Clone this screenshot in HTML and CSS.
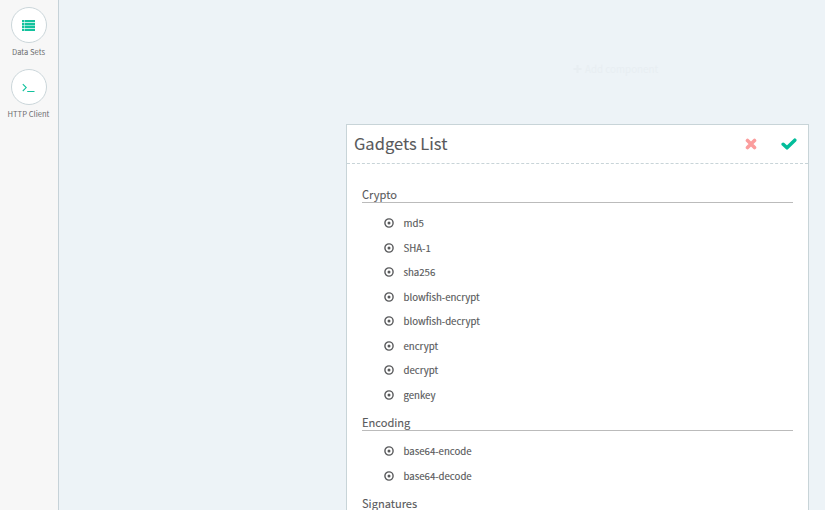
FILE: index.html
```html
<!DOCTYPE html>
<html lang="en">
<head>
<meta charset="utf-8">
<title>Gadgets</title>
<link rel="stylesheet" href="styles.css">
</head>
<body>
<svg class="defs" width="0" height="0" aria-hidden="true">
  <symbol id="dot" viewBox="0 0 10 10"><circle cx="5" cy="5" r="4.1" fill="none" stroke="currentColor" stroke-width="1.4"/><circle cx="5" cy="5" r="1.5" fill="currentColor"/></symbol>
</svg>
<div class="app">
  <nav class="sidebar">
    <a class="tool">
      <span class="circle"><svg width="13" height="11" viewBox="0 0 13 11"><path fill="currentColor" d="M0 0h2.4v2.3H0zM2.9 0H13v2.3H2.9zM0 2.9h2.4v2.3H0zM2.9 2.9H13v2.3H2.9zM0 5.8h2.4v2.3H0zM2.9 5.8H13v2.3H2.9zM0 8.7h2.4V11H0zM2.9 8.7H13V11H2.9z"/></svg></span>
      <span class="label">Data Sets</span>
    </a>
    <a class="tool">
      <span class="circle"><svg width="13" height="11" viewBox="0 0 13 11"><path fill="none" stroke="currentColor" stroke-width="1.1" d="M.8 2.2 4.2 5.6.8 9M5.2 9.5H12.5"/></svg></span>
      <span class="label">HTTP Client</span>
    </a>
  </nav>
  <main class="canvas">
    <div class="add"><svg width="9" height="8" viewBox="0 0 8 8"><path d="M4 0v8M0 4h8" stroke="currentColor" stroke-width="2"/></svg><span>Add component</span></div>
    <section class="modal">
      <header class="head">
        <h1>Gadgets List</h1>
        <svg class="cancel" width="12" height="12" viewBox="0 0 12 12"><path d="M2.5 2.5 9.5 9.5M9.5 2.5 2.5 9.5" stroke="currentColor" stroke-width="3.6" stroke-linecap="round"/></svg>
        <svg class="confirm" width="16" height="12" viewBox="0 0 16 12"><path d="M2.2 6.3 6 9.8 13.8 2.2" fill="none" stroke="currentColor" stroke-width="3.5" stroke-linecap="round" stroke-linejoin="round"/></svg>
      </header>
      <div class="body">
        <h2>Crypto</h2>
        <ul>
          <li><svg><use href="#dot"/></svg>md5</li>
          <li><svg><use href="#dot"/></svg>SHA-1</li>
          <li><svg><use href="#dot"/></svg>sha256</li>
          <li><svg><use href="#dot"/></svg>blowfish-encrypt</li>
          <li><svg><use href="#dot"/></svg>blowfish-decrypt</li>
          <li><svg><use href="#dot"/></svg>encrypt</li>
          <li><svg><use href="#dot"/></svg>decrypt</li>
          <li><svg><use href="#dot"/></svg>genkey</li>
        </ul>
        <h2>Encoding</h2>
        <ul>
          <li><svg><use href="#dot"/></svg>base64-encode</li>
          <li><svg><use href="#dot"/></svg>base64-decode</li>
        </ul>
        <h2>Signatures</h2>
      </div>
    </section>
  </main>
</div>
</body>
</html>
```
FILE: styles.css
```css
* { box-sizing: border-box; }
body { margin: 0; font-family: "Noto Sans CJK SC", "Noto Sans", sans-serif; color: #58595b; }
.defs { display: none; }
.app { display: flex; height: 510px; overflow: hidden; }
.sidebar { width: 59px; flex: none; background: #f7f7f7; border-right: 1px solid #c6d2d8; padding: 7px 1px 0 0; }
.tool { display: flex; flex-direction: column; align-items: center; height: 62px; color: #12c29d; }
.circle { display: flex; align-items: center; justify-content: center; width: 36px; height: 36px; border: 1px solid #cbd6da; border-radius: 50%; background: #fff; }
.circle svg { display: block; }
.label { margin-top: 3px; font-size: 7.6px; line-height: 12px; color: #6c6d6f; white-space: nowrap; }
.canvas { flex: 1; background: #edf3f7; padding-right: 16px; }
.add { display: flex; align-items: center; gap: 3px; height: 20px; margin: 59px 0 45px 514px; font-size: 9.8px; color: #e8eef2; white-space: nowrap; }
.modal { width: 463px; height: 400px; margin-left: 287px; background: #fff; border: 1px solid #c8d4d8; }
.head { display: flex; align-items: center; height: 39px; padding: 0 11px 0 7px; border-bottom: 1px dashed #c8d4d8; }
h1 { flex: 1; margin: 0; font-size: 16.5px; line-height: 36px; padding-bottom: 2px; font-weight: 400; -webkit-text-stroke: 0.1px currentColor; }
.cancel { color: #fb9d9d; margin-right: 24px; }
.confirm { color: #02bd9a; }
.body { padding: 15px 15px 0; }
h2 { margin: 0; height: 24px; border-bottom: 1px solid #bbb; font-size: 11.1px; line-height: 16px; padding-top: 7px; font-weight: 400; -webkit-text-stroke: 0.1px currentColor; }
ul { list-style: none; margin: 0; padding: 8px 0 0 22px; }
li { display: flex; align-items: center; height: 24.5px; font-size: 9.65px; -webkit-text-stroke: 0.15px currentColor; }
li svg { width: 10px; height: 10px; margin-right: 9.5px; }
```
